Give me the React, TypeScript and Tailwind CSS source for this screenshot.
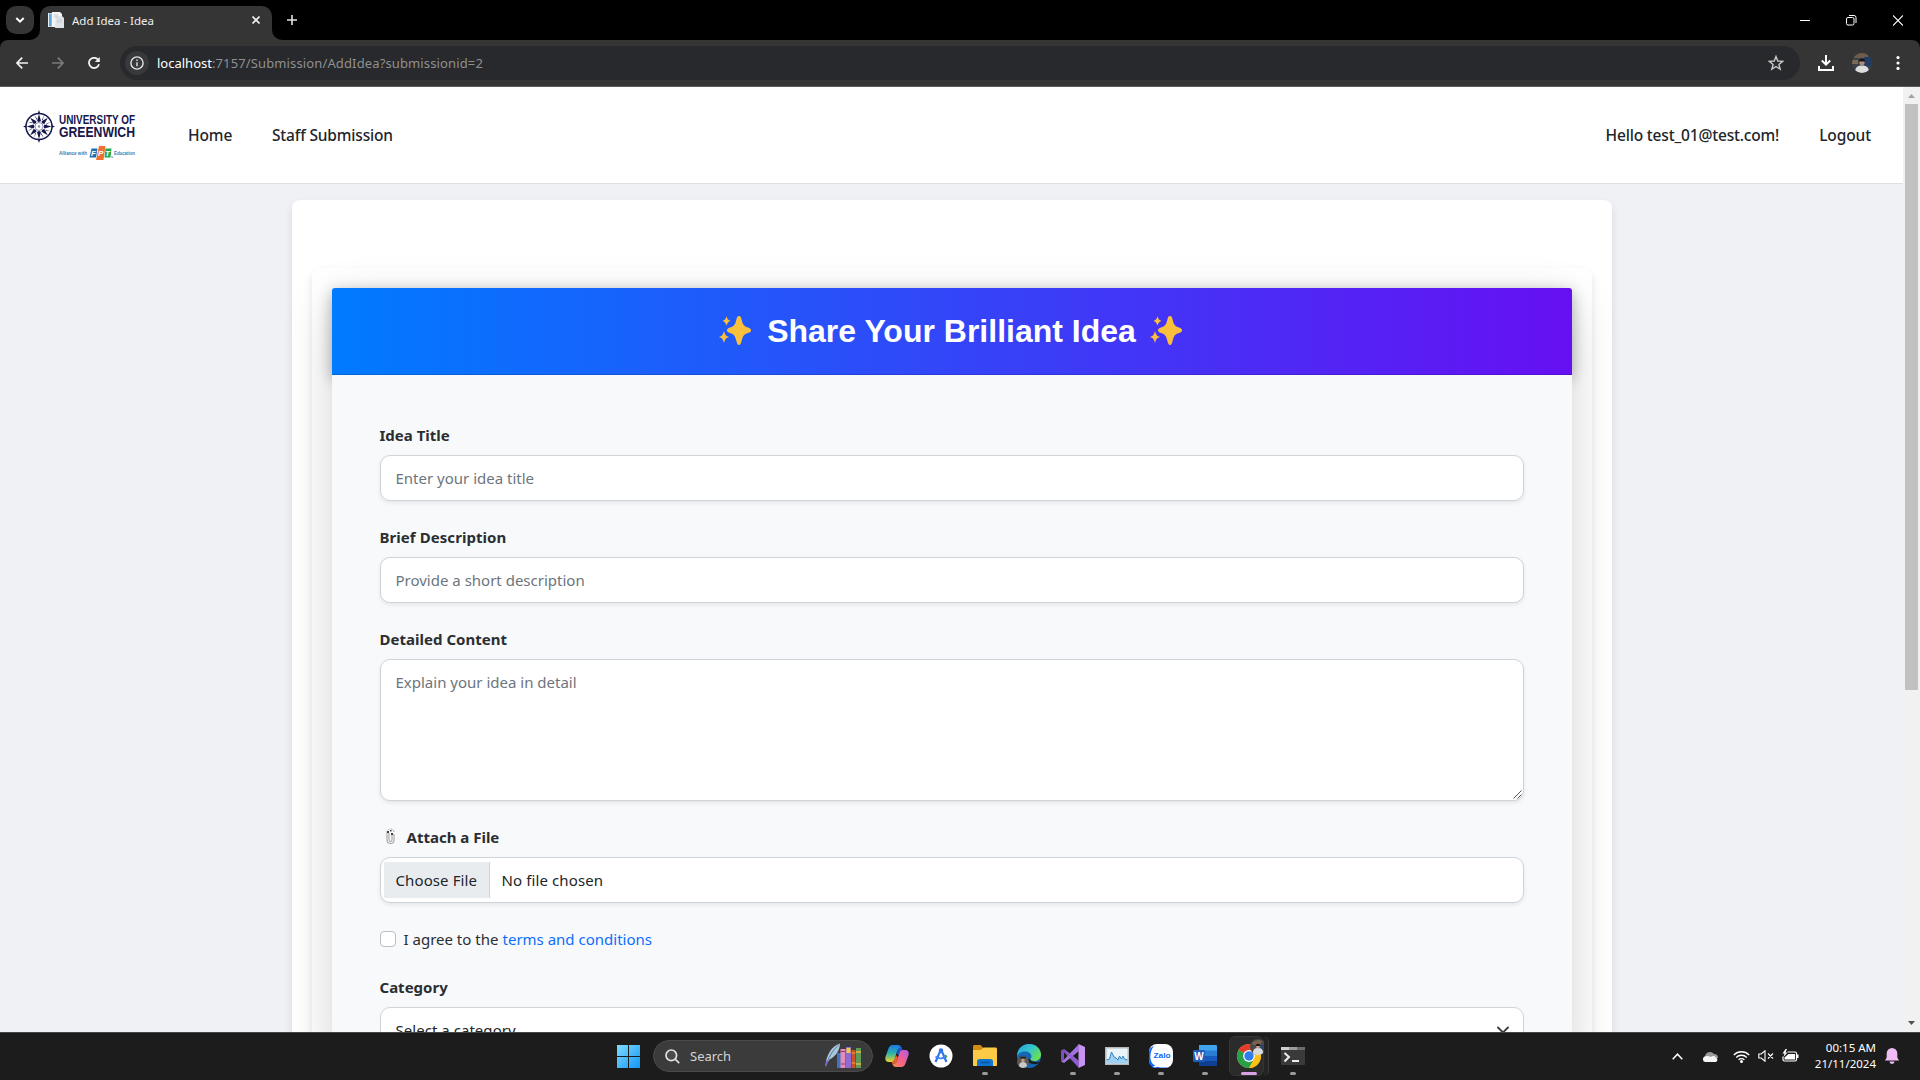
import React from "react";

function TabStrip() {
  return (
    <div className="flex h-10 items-start bg-black pt-1.5 pl-1.5">
      <button className="flex size-7 items-center justify-center rounded-[10px] bg-[#353535]">
        <svg width="10" height="6" viewBox="0 0 10 6" fill="none" stroke="#fff" strokeWidth="2">
          <path d="M1.3 1 5 4.6 8.7 1" />
        </svg>
      </button>
      <div className="relative ml-1.5 flex h-[34px] w-[232px] items-start rounded-t-[10px] bg-[#353535] pt-1.5 pl-2">
        <svg className="absolute bottom-0 -left-2.5" width="10" height="10">
          <path d="M10 0v10H0A10 10 0 0 0 10 0z" fill="#353535" />
        </svg>
        <svg className="absolute -right-2.5 bottom-0" width="10" height="10">
          <path d="M0 0v10h10A10 10 0 0 1 0 0z" fill="#353535" />
        </svg>
        <svg width="16" height="16" viewBox="0 0 16 16">
          <path d="M0 1h5v14H0z" fill="#e9f1f7" />
          <path d="M1 1.500h2.700v13H1z" fill="#5fa5d6" />
          <path d="M4 0h8l2 2v13H4z" fill="#f4f4f4" />
          <path d="M8 4h6l2 2v10H7z" fill="#dfe3e6" />
          <path d="M6 3h4M6 5h4M9 8h5M9 10h5" stroke="#c3cbd1" />
        </svg>
        <span className="mt-px ml-2 text-[11.5px] leading-[16px] text-[#eee]">Add Idea - Idea</span>
        <svg className="mt-[4px] ml-auto mr-3" width="8" height="8" viewBox="0 0 8 8" stroke="#eee" strokeWidth="1.600">
          <path d="M.5.5l7 7M7.500.5l-7 7" />
        </svg>
      </div>
      <svg className="mt-[9px] ml-[15px]" width="10" height="10" viewBox="0 0 10 10" stroke="#e3e3e3" strokeWidth="1.600">
        <path d="M5 0v10M0 5h10" />
      </svg>
      <div className="mt-[9px] mr-[17px] ml-auto flex gap-9">
        <svg width="10" height="10" stroke="#fff">
          <path d="M0 5.500h10" />
        </svg>
        <svg width="11" height="11" fill="none" stroke="#fff">
          <rect x=".5" y="2.500" width="7.500" height="7.500" rx="1.500" />
          <path d="M3 .5h5a2 2 0 0 1 2 2v5.500" />
        </svg>
        <svg width="10" height="11" viewBox="0 0 10 11" stroke="#fff" strokeWidth="1.100">
          <path d="M0 .5l10 10M10 .5l-10 10" />
        </svg>
      </div>
    </div>
  );
}

function Toolbar() {
  return (
    <div className="bg-black">
      <div className="flex h-[47px] items-start rounded-t-lg border-b border-[#5a5a5a] bg-[#353535] pt-1.5 pl-4">
        <div className="flex h-[34px] w-[104px] items-center">
          <svg width="12" height="12" viewBox="0 0 12 12" fill="none" stroke="#f1f1f1" strokeWidth="1.700">
            <path d="M12 6H1M6.200.6.9 6l5.300 5.400" />
          </svg>
          <svg className="ml-6" width="12" height="12" viewBox="0 0 12 12" fill="none" stroke="#7b7b7b" strokeWidth="1.700">
            <path d="M0 6h11M5.800.6 11.100 6l-5.300 5.400" />
          </svg>
          <svg className="ml-6" width="12" height="12" viewBox="0 0 12 12" fill="none" stroke="#f1f1f1" strokeWidth="1.800">
            <path d="M10.300 3A5.100 5.100 0 1 0 11 7.300" />
            <path d="M11.800 0v5H6.800z" fill="#f1f1f1" stroke="none" />
          </svg>
        </div>
        <div className="flex h-[34px] w-[1680px] items-center rounded-full bg-[#28292c] pl-[5px] pr-4">
          <span className="flex size-6 items-center justify-center rounded-full bg-[#38393b]">
            <svg width="14" height="14" viewBox="0 0 14 14" fill="none" stroke="#e3e3e3" strokeWidth="1.400">
              <circle cx="7" cy="7" r="6.100" />
              <path d="M7 6.300v4M7 3.500v1.500" />
            </svg>
          </span>
          <span className="ml-2 text-[13px] leading-4 text-[#8f9092]">
            <span className="text-white">localhost</span>
            <span className="tracking-[0.13px]">:7157/Submission/AddIdea?submissionid=2</span>
          </span>
          <svg className="ml-auto" width="16" height="16" viewBox="0 0 16 16" fill="none" stroke="#c7c7c7" strokeWidth="1.400">
            <path d="M8 1.400 9.800 6l4.900.3-3.800 3.100 1.300 4.800L8 11.500l-4.200 2.700 1.300-4.800L1.300 6.300 6.200 6z" />
          </svg>
        </div>
        <div className="ml-[17px] flex h-[34px] items-center">
          <svg width="18" height="18" viewBox="0 0 18 18" fill="none" stroke="#fff" strokeWidth="2">
            <path d="M9 1v9M4.800 6.500 9 10.700l4.200-4.200M2 12v4h14v-4" />
          </svg>
          <svg className="ml-[17px]" width="20" height="20" viewBox="0 0 20 20">
            <clipPath id="avatar">
              <circle cx="10" cy="10" r="10" />
            </clipPath>
            <g clipPath="url(#avatar)">
              <path d="M0 0h20v20H0z" fill="#3b4148" />
              <path d="M2 0h14v5H2z" fill="#6f5d4c" />
              <path d="M12 4h8v9h-8z" fill="#243c63" />
              <path d="M0 7h6v4H0z" fill="#7d6a52" />
              <path d="M3 20c0-5.500 2-7.500 7-7.500s7 2 7 7.500z" fill="#dcdedd" />
              <circle cx="10" cy="9.500" r="2.600" fill="#b58c77" />
              <path d="M7 8.500a3 3 0 0 1 6 0z" fill="#15161a" />
            </g>
          </svg>
          <svg className="ml-6" width="4" height="14" viewBox="0 0 4 14" fill="#fff">
            <circle cx="2" cy="1.600" r="1.600" />
            <circle cx="2" cy="7" r="1.600" />
            <circle cx="2" cy="12.400" r="1.600" />
          </svg>
        </div>
      </div>
    </div>
  );
}

const spokes = [0, 45, 90, 135, 180, 225, 270, 315];

function Logo() {
  return (
    <svg className="overflow-visible" width="114" height="54" viewBox="0 0 114 54" fontFamily="Liberation Sans, sans-serif">
      <g transform="translate(17 16.500)" fill="#15164b">
        <circle r="13" fill="none" stroke="#15164b" strokeWidth="1.500" />
        {spokes.map((a) => (
          <g key={a} transform={`rotate(${a})`}>
            <path d="M0-12.500 2-5.500 0-4.500-2-5.500z" />
            <path d="M4.700-11.500 3.900-6.200 3.200-6.800z" />
          </g>
        ))}
        <path d="M0-16.500 1.200-13h-2.400zM0 16.500l1.200-3.500h-2.400zM-16 0l3-1.200v2.400zM16 0l-3-1.200v2.400z" />
        <circle r="4" fill="none" stroke="#8d8eac" strokeWidth="1" />
        <circle r="1.200" fill="#8d8eac" />
      </g>
      <text x="37" y="14" fontSize="13" fontWeight="700" fill="#15164b" textLength="76" lengthAdjust="spacingAndGlyphs">UNIVERSITY OF</text>
      <text x="37" y="27.300" fontSize="15.500" fontWeight="700" fill="#15164b" textLength="76" lengthAdjust="spacingAndGlyphs">GREENWICH</text>
      <text x="37" y="45.300" fontSize="5.800" fontWeight="700" fill="#2f7fb8" textLength="28" lengthAdjust="spacingAndGlyphs">Alliance with</text>
      <path d="M69.500 38.500h6l-1.500 9h-6.500z" fill="#1b6fb5" />
      <path d="M83.500 38.500h6l-1 9h-6z" fill="#1fab4f" />
      <path d="M77 36h6.500l-2 14H74z" fill="#ee7130" />
      <g fontSize="8" fontWeight="700" fontStyle="italic" fill="#fff">
        <text x="69" y="46">F</text>
        <text x="76" y="46">P</text>
        <text x="83" y="46">T</text>
      </g>
      <path d="M89.500 46.500h1.200v1.200h-1.200z" fill="#1b6fb5" />
      <text x="92" y="45.300" fontSize="5.800" fontWeight="700" fill="#2f7fb8" textLength="21" lengthAdjust="spacingAndGlyphs">Education</text>
    </svg>
  );
}

function Navbar() {
  return (
    <nav className="flex h-[97px] shrink-0 items-center border-b border-[#dddfe3] bg-white pt-0.5 pr-8 pl-[22px] text-[15.5px] font-medium text-[#212529]">
      <div className="mt-px h-[54px] w-[166px]">
        <Logo />
      </div>
      <a className="w-[84px] tracking-[-0.1px]">Home</a>
      <a className="tracking-[-0.17px]">Staff Submission</a>
      <a className="mr-10 ml-auto tracking-[-0.17px]">Hello test_01@test.com!</a>
      <a className="tracking-[-0.11px]">Logout</a>
    </nav>
  );
}

function Sparkles() {
  return (
    <svg className="mt-[-2px]" width="32" height="29" viewBox="0 0 32 29" fill="#fac03c">
      <path d="M20 0c1.500 0 2 1 2.600 3.500 1.300 5.500 2.300 6.700 6.400 8 2 .7 3 1.400 3 2.800s-1 2.100-3 2.800c-4.100 1.300-5.100 2.600-6.400 8C22 27.500 21.500 29 20 29s-2-1.500-2.600-3.900c-1.300-5.400-2.300-6.700-6.400-8-2-.7-3-1.400-3-2.800s1-2.100 3-2.800c4.100-1.300 5.100-2.500 6.400-8C18 1 18.500 0 20 0z" />
      <path d="M7.500.3C8.700 3.500 9 4 11.500 5 9 6 8.700 6.500 7.500 9.700 6.300 6.500 6 6 3.500 5 6 4 6.300 3.500 7.500.3zM5 15c1.300 4.200 1.800 4.900 5 6-3.200 1.100-3.700 1.800-5 6-1.300-4.200-1.800-4.900-5-6 3.200-1.100 3.700-1.800 5-6z" />
    </svg>
  );
}

function Field({ label, children }: { label: React.ReactNode; children: React.ReactNode }) {
  return (
    <div className="mb-6">
      <label className="mb-2 flex h-6 items-center text-[15px] font-bold text-[#2b2e31]">{label}</label>
      {children}
    </div>
  );
}

function IdeaForm() {
  return (
    <div className="rounded-sm bg-[#f8f9fb] shadow-[0_16px_48px_rgba(0,0,0,0.175)]">
      <div className="flex h-[87px] items-center justify-center rounded-t-[3px] border-b border-black/15 bg-linear-to-r/srgb from-[#007bff] to-[#6610f2] pr-0.5 shadow-[0_4px_15px_rgba(0,0,0,0.3)]">
        <Sparkles />
        <h1 className="mr-[14px] ml-4 font-['Liberation_Sans'] text-[32px] leading-none font-bold text-white">Share Your Brilliant Idea</h1>
        <Sparkles />
      </div>
      <div className="relative bg-[#f8f9fb] px-12 pt-12">
        <Field label={<span>Idea Title</span>}>
          <div className="flex h-[46px] items-center rounded-[10px] border border-[#ced4da] bg-white px-[15px] text-[15px] text-[#6c757d] shadow-[0_2px_4px_rgba(0,0,0,0.08)]">Enter your idea title</div>
        </Field>
        <Field label={<span className="tracking-[0.06px]">Brief Description</span>}>
          <div className="flex h-[46px] items-center rounded-[10px] border border-[#ced4da] bg-white px-[15px] text-[15px] text-[#6c757d] shadow-[0_2px_4px_rgba(0,0,0,0.08)]">Provide a short description</div>
        </Field>
        <Field label={<span className="tracking-[0.02px]">Detailed Content</span>}>
          <div className="flex h-[142px] items-start justify-between rounded-[10px] border border-[#ced4da] bg-white pt-2.5 pl-[15px] text-[15px] leading-6 text-[#6c757d] shadow-[0_2px_4px_rgba(0,0,0,0.08)]">
            Explain your idea in detail
            <svg className="mr-px mb-px self-end" width="9" height="9" stroke="#555">
              <path d="M.5 8.500l8-8M4.500 8.500l4-4" />
            </svg>
          </div>
        </Field>
        <Field
          label={
            <>
              <svg className="mt-[-2px] mr-[12px] ml-[6px]" width="9" height="17" viewBox="0 0 9 17" fill="none">
                <path d="M1 5V12a3.500 3.500 0 0 0 7 0V6M3 5v7a1.500 1.500 0 0 0 3 0V7" stroke="#a5a5a5" strokeWidth="1.100" />
                <path d="M1 5C1 2 2.500 1 4.500 1S8 2 8 4" stroke="#aaa" strokeDasharray="2 1" />
                <path d="M1 3h2v2H1zM5 5h2v2H5zM4 2h1.500v1.500H4z" fill="#4b3a3a" />
              </svg>
              <span>Attach a File</span>
            </>
          }
        >
          <div className="flex h-[46px] items-center rounded-[10px] border border-[#ced4da] bg-white pl-[3px] text-[15px] text-[#212529] shadow-[0_2px_4px_rgba(0,0,0,0.08)]">
            <span className="flex h-9 w-[106px] items-center border-r border-[#ced4da] bg-[#e9ecef] pl-3 tracking-[0.1px]">Choose File</span>
            <span className="ml-3 tracking-[0.11px]">No file chosen</span>
          </div>
        </Field>
        <div className="mb-6 flex h-6 items-center text-[15px] text-[#2b2e31]">
          <span className="mr-2 size-4 rounded border border-[#bcbec1] bg-white" />
          <span className="w-[95px]">I agree to the</span>
          <a className="ml-[4px] text-[#0d6efd]">terms and conditions</a>
        </div>
        <Field label={<span>Category</span>}>
          <div className="flex h-[46px] items-center justify-between rounded-[10px] border border-[#ced4da] bg-white pr-[14px] pl-[15px] text-[15px] tracking-[0.04px] text-[#212529]">
            Select a category
            <svg width="12" height="8" viewBox="0 0 12 8" fill="none" stroke="#343a40" strokeWidth="1.800" strokeLinecap="round" strokeLinejoin="round">
              <path d="M1 1.500l5 5 5-5" />
            </svg>
          </div>
        </Field>
      </div>
    </div>
  );
}

function Scrollbar() {
  return (
    <div className="flex w-[17px] shrink-0 flex-col items-center bg-[#f1f1f1]">
      <svg className="mt-[7px]" width="7" height="4" fill="#a3a3a3">
        <path d="M3.500 0 7 4H0z" />
      </svg>
      <div className="mt-[6px] h-[586px] w-[13px] bg-[#c1c1c1]" />
      <svg className="mt-auto mb-[7px]" width="7" height="4" fill="#505050">
        <path d="M3.500 4 7 0H0z" />
      </svg>
    </div>
  );
}

function TaskItem({ children, open }: { children: React.ReactNode; open?: boolean }) {
  return (
    <div className="flex w-11 flex-col items-center">
      <div className="mt-[11px] size-6">{children}</div>
      {open && <span className="mt-1 h-[3px] w-1.5 rounded-full bg-[#9a9a9a]" />}
    </div>
  );
}

function Taskbar() {
  return (
    <div className="flex h-[48px] items-start border-t border-[#454545] bg-[#1c1c1c]">
      <svg className="mt-3 ml-[617px]" width="23" height="23" viewBox="0 0 23 23">
        <defs>
          <linearGradient id="win" x1="0" y1="0" x2="23" y2="23" gradientUnits="userSpaceOnUse">
            <stop stopColor="#7fdcff" />
            <stop offset="1" stopColor="#1296f5" />
          </linearGradient>
        </defs>
        <path fill="url(#win)" d="M0 0h11v11H0zM12 0h11v11H12zM0 12h11v11H0zM12 12h11v11H12z" />
      </svg>
      <div className="mt-[7px] ml-[13px] flex h-8 w-[220px] items-center rounded-full border border-[#4a4a4a] bg-[#3b3b3b] pl-[11px]">
        <svg width="15" height="15" viewBox="0 0 15 15" fill="none" stroke="#e0e0e0" strokeWidth="1.700">
          <circle cx="6.300" cy="6.300" r="5.300" fill="#4a4a4a" />
          <path d="M10.200 10.200l4 4" />
        </svg>
        <span className="ml-2.5 text-[13px] leading-4 text-[#d4d4d4]">Search</span>
        <svg className="mt-[-1px] ml-auto mr-[10px]" width="37" height="26" viewBox="0 0 37 26">
          <path d="M.5 23C1 13 6 3 15 .5c0 6-4 13-10.500 16z" fill="#a9c6dc" />
          <path d="M1 23.500C3 15 7 8 14 1.500" stroke="#5b7e9a" fill="none" />
          <path d="M0 23.500l1.500-6 2 1z" fill="#7d5fd0" />
          <path d="M12 10h4v15h-4z" fill="#3f73c8" />
          <path d="M15.500 6h5v19h-5z" fill="#e58bb4" />
          <path d="M16 8.500h4M16 21h4" stroke="#8f3f6f" />
          <path d="M21 4h5v21h-5z" fill="#8f6ad0" />
          <path d="M21.500 5h4v5h-4z" fill="#f1c948" />
          <path d="M26.500 7h4v18h-4z" fill="#c9542c" />
          <path d="M26.500 10h4M26.500 20h4" stroke="#f2a043" />
          <path d="M31 5h5v20h-5z" fill="#5e9b58" />
          <path d="M31 9h5M31 21h5" stroke="#f0b342" strokeWidth="1.500" />
        </svg>
      </div>
      <div className="ml-0.5 flex">
        <TaskItem>
          <svg viewBox="0 0 24 24">
            <defs>
              <linearGradient id="cpa" x1="0" y1="0" x2="0" y2="1">
                <stop stopColor="#1b78e8" />
                <stop offset=".5" stopColor="#2fb4a8" />
                <stop offset="1" stopColor="#f3d22b" />
              </linearGradient>
              <linearGradient id="cpb" x1="1" y1="0" x2="0" y2="1">
                <stop stopColor="#b05cf0" />
                <stop offset=".5" stopColor="#f0608e" />
                <stop offset="1" stopColor="#fb8a4a" />
              </linearGradient>
            </defs>
            <path d="M16.500 4C16 2 15 1 13 1H7.500C5.500 1 4.300 2.300 3.500 4.500L.6 12.500C-.4 16 1 18 3.500 18H6.500c2 0 2.700-1.200 3.300-3.200L12 7.500C12.700 5.200 14 4 16.500 4z" fill="url(#cpa)" />
            <path d="M7.500 20c.5 2 1.500 3 3.500 3h5.500c2 0 3.200-1.300 4-3.500l2.900-8c1-3.500-.4-5.500-2.900-5.500h-3c-2 0-2.700 1.200-3.300 3.200L12 16.500C11.300 18.800 10 20 7.500 20z" fill="url(#cpb)" />
            <path d="M13 1c2.500 0 3.300 1.500 4 3.500l.6 1.500c-2 0-2.700 1.200-3.400 3.200l-.7 2.300L11.500 9 12 7.500C12.500 5 13 4 15.500 4z" fill="#1f56c9" />
            <path d="M7.500 20c-.5-1-.8-2-1-2 2 0 2.700-1.200 3.300-3.200L11 11l1.800 2.500-.8 3C11.300 18.800 10 20 7.500 20z" fill="#e8642c" />
          </svg>
        </TaskItem>
        <TaskItem>
          <svg viewBox="0 0 24 24">
            <circle cx="12" cy="12" r="11.500" fill="#fff" />
            <path d="M12 5.500 6.500 18M12 5.500 17.500 18" stroke="#2f74ea" strokeWidth="2.200" fill="none" />
            <path d="M6.500 12.500c3 2.500 8 2.500 11-.5" stroke="#4285f4" strokeWidth="1.800" fill="none" />
            <circle cx="12" cy="6.500" r="2.200" fill="#2f74ea" />
            <path d="M15.500 10.500a3 3 0 0 1 3 2.500l-2 1z" fill="#34a853" />
            <circle cx="12" cy="11" r="1.300" fill="#fff" />
          </svg>
        </TaskItem>
        <TaskItem open>
          <svg viewBox="0 0 24 24">
            <path d="M0 2.500C0 1.700.7 1 1.500 1h6L10 3.500V8H0z" fill="#d18b12" />
            <path d="M0 6h8l2.500-2.500h12c.8 0 1.500.7 1.500 1.500v16c0 .6-.4 1-1 1H1c-.6 0-1-.4-1-1z" fill="#fbcb46" />
            <path d="M4 22v-4.500C4 16 5 15 6.500 15h11c1.500 0 2.500 1 2.500 2.500V22z" fill="#1174cf" />
            <path d="M7.500 18.500h9" stroke="#0b53a0" strokeWidth="1.500" />
          </svg>
        </TaskItem>
        <TaskItem>
          <svg viewBox="0 0 24 24">
            <defs>
              <linearGradient id="edge" x1="0" y1="0" x2="1" y2=".6">
                <stop stopColor="#2b9fe6" />
                <stop offset=".55" stopColor="#33c6c8" />
                <stop offset="1" stopColor="#6be04e" />
              </linearGradient>
            </defs>
            <circle cx="12" cy="12" r="12" fill="#1466b4" />
            <path d="M.3 9.500C1.500 4 6.200 0 12 0c7 0 12 5 12 10.500 0 4-3 6.500-6.500 6.500-2.500 0-4-.8-4-1.700 0-.8 1-1.200 1-3C14.500 10 12 7.500 8.500 7.500 4.500 7.500 1 9 .3 13z" fill="url(#edge)" />
            <path d="M13 15c0 2 3.500 4 9.500 2.500l-1.500 2c-4 1.500-10 .5-11-4z" fill="#1c1c1c" />
            <circle cx="6" cy="18" r="6" fill="#5d5751" />
            <path d="M2 22c0-3 1.800-4 4-4s4 1 4 4c-2 2.500-6 2.500-8 0z" fill="#c8c8c8" />
            <circle cx="6" cy="16.500" r="1.800" fill="#c09a84" />
            <path d="M3 13.500h6" stroke="#1f2329" strokeWidth="1.500" />
          </svg>
        </TaskItem>
        <TaskItem open>
          <svg viewBox="0 0 24 24">
            <path d="M17.500 0 24 3v18l-6.500 3z" fill="#c792f0" />
            <path d="M0 6.500 3 5l15 12v7L3 8.500v7L0 17z" fill="#7d52b8" />
            <path d="M0 17.500 3 19 18 7V0L3 15.500z" fill="#a273dc" />
            <path d="M3 9v6l3-3z" fill="#1c1c1c" />
            <path d="M3 5 18 17v7z" fill="#8f60cd" />
          </svg>
        </TaskItem>
        <TaskItem open>
          <svg viewBox="0 0 24 24">
            <path d="M0 3h24v18H0z" fill="#b6b9bb" />
            <path d="M1.500 4.500h21v15h-21z" fill="#e9f3fa" />
            <path d="M1.500 16l3-1 2-7 2.500 5 2 1 2 2 1.500-4 2 3 1.500-3 1.500 3 3 1v3.500h-21z" fill="#9fd0f2" />
            <path d="M1.500 16l3-1 2-7 2.500 5 2 1 2 2 1.500-4 2 3 1.500-3 1.500 3 3 1" fill="none" stroke="#2f86c6" />
          </svg>
        </TaskItem>
        <TaskItem open>
          <svg viewBox="0 0 24 24">
            <rect width="24" height="24" rx="8" fill="#fff" />
            <path d="M5 2C1 6-1 18 6 21.500c-1 1-2 1.300-4 1.500 2 1 5 .5 6.500-.3 3 1 7 1.200 10.500.3-1.500 1-3 1-4 1H8c-5 0-8-3-8-8V8c0-3 2-5 5-6z" fill="#0a68ff" />
            <text x="4.500" y="14" fontFamily="Liberation Sans, sans-serif" fontSize="8" fontWeight="700" fill="#0a68ff" textLength="17" lengthAdjust="spacingAndGlyphs">Zalo</text>
          </svg>
        </TaskItem>
        <TaskItem open>
          <svg viewBox="0 0 24 24">
            <path d="M6 1h17a1 1 0 0 1 1 1v5H6z" fill="#41a5ee" />
            <path d="M6 6.500h18V12H6z" fill="#2b7cd3" />
            <path d="M6 12h18v5H6z" fill="#185abd" />
            <path d="M6 17h18v4a1 1 0 0 1-1 1H7a1 1 0 0 1-1-1z" fill="#103f91" />
            <rect y="6" width="12" height="12" rx="1" fill="#1b5cbe" />
            <text x="6" y="15.500" textAnchor="middle" fontFamily="Liberation Sans, sans-serif" fontSize="10" fontWeight="700" fill="#fff">W</text>
          </svg>
        </TaskItem>
        <div className="flex w-11 pt-[3px] pl-0.5">
          <div className="flex h-10 w-[35px] flex-col items-center rounded-md border border-[#353535] bg-[#2b2b2b] pt-[7px] pl-[5px]">
            <svg className="size-6 shrink-0 overflow-visible" viewBox="0 0 24 24">
              <circle cx="12" cy="12" r="12" fill="#fbc116" />
              <path d="M12 12 1.600 6A12 12 0 0 1 22.400 6z" fill="#e33b2e" />
              <path d="M12 12 1.600 6A12 12 0 0 0 12 24l5.200-9z" fill="#27a047" />
              <path d="M12 6h10.400A12 12 0 0 1 12 24l5.200-9z" fill="#fbc116" />
              <circle cx="12" cy="12" r="5.900" fill="#fff" />
              <circle cx="12" cy="12" r="4.700" fill="#2f7bf0" />
              <circle cx="21" cy="3" r="8" fill="#4c4a48" />
              <path d="M15-1a8 8 0 0 1 10-2l-2 4h-7z" fill="#77624d" />
              <path d="M23 1h5v5h-5z" fill="#2c4468" />
              <path d="M16 9c0-4 2-5 5-5s5 1 5 5c-3 3-7 3-10 0z" fill="#d9dada" />
              <circle cx="21" cy="2.500" r="2" fill="#c39b86" />
              <path d="M18.800 2a2.200 2.200 0 0 1 4.400 0z" fill="#15161a" />
            </svg>
            <span className="mt-1 h-[3px] w-4 shrink-0 rounded-full bg-[#d9a0e6]" />
          </div>
          <div className="h-10 w-[5px] rounded-r-md border-r border-[#3a3a3a] bg-[#242424]" />
        </div>
        <TaskItem open>
          <svg viewBox="0 0 24 24">
            <rect y="3" width="24" height="18" rx="1" fill="#3a3a3a" />
            <path d="M0 3h8v3H0z" fill="#d0d0d0" />
            <path d="M8 3h8v3H8z" fill="#9c9c9c" />
            <path d="M16 3h8v3h-8z" fill="#6b6b6b" />
            <path d="M3.500 9l4.500 4-4.500 4.500M11 17h7" fill="none" stroke="#eee" strokeWidth="2" />
          </svg>
        </TaskItem>
      </div>
      <div className="ml-auto flex h-[46px] items-center pr-[21px]">
        <svg width="11" height="7" viewBox="0 0 11 7" fill="none" stroke="#fff" strokeWidth="1.500">
          <path d="M.7 6.200 5.500 1.200l4.800 5" />
        </svg>
        <svg className="ml-[19px]" width="17" height="11" viewBox="0 0 17 11">
          <path d="M3 5.500A5 5 0 0 1 12 3a4 4 0 0 1 4 4H1.500z" fill="#9b9b9b" />
          <path d="M3 11a3 3 0 0 1-.5-5.500C5 4.500 7 5 8.500 6c2.500-1.500 4-1 5.500.5A2.500 2.500 0 0 1 14 11z" fill="#f6f6f6" />
        </svg>
        <svg className="ml-[14px]" width="17" height="13" viewBox="0 0 17 13" fill="none" stroke="#fff" strokeWidth="1.300">
          <path d="M.8 5a10.800 10.800 0 0 1 15.400 0M3.200 7.500a7.400 7.400 0 0 1 10.600 0M5.600 9.900a4 4 0 0 1 5.800 0" />
          <circle cx="8.500" cy="11.400" r="1.500" fill="#fff" stroke="none" />
        </svg>
        <svg className="ml-[8px]" width="16" height="12" viewBox="0 0 16 12" fill="none" stroke="#fff" strokeWidth="1.100">
          <path d="M.8 4v4h2.400L7 11.200V.8L3.200 4zM10 3.500l5 5M15 3.500l-5 5" />
        </svg>
        <svg className="mt-[-2px] ml-[8px]" width="17" height="13" viewBox="0 0 17 13" fill="none" stroke="#fff" strokeWidth="1.200">
          <path d="M5.500 3H13a1.500 1.500 0 0 1 1.500 1.500v6A1.500 1.500 0 0 1 13 12H2.500A1.500 1.500 0 0 1 1 10.500V7.500" />
          <path d="M6.500 5h6.500v5.500H2.500V8.500z" fill="#fff" stroke="none" />
          <path d="M15 5.500h1.500v3.500H15zM3.500 0 .5 4.500h2l-1 3.500 4-4.500h-2L5 0z" fill="#fff" stroke="none" />
        </svg>
        <div className="mr-px ml-[15px] w-[62px] text-right text-[11.5px] leading-4 text-white">
          <div>00:15 AM</div>
          <div>21/11/2024</div>
        </div>
        <svg className="ml-[8px]" width="14" height="16" viewBox="0 0 14 16" fill="#efbcf4">
          <path d="M7 0a5.300 5.300 0 0 1 5.300 5.300V9.500L14 12.500H0L1.700 9.500V5.300A5.300 5.300 0 0 1 7 0zM4.500 13.500h5a2.500 2.500 0 0 1-5 0z" />
        </svg>
      </div>
    </div>
  );
}

export default function App() {
  return (
    <div className="flex h-[1080px] w-[1920px] flex-col overflow-hidden bg-black font-['Noto_Sans',sans-serif]">
      <TabStrip />
      <Toolbar />
      <div className="flex min-h-0 flex-1 overflow-hidden bg-[#f0f1f5]">
        <div className="flex min-w-0 flex-1 flex-col overflow-hidden">
          <Navbar />
          <main className="mx-auto mt-4 w-[1320px] shrink-0 rounded-lg bg-white px-5 pt-[68px] shadow-[0_4px_8px_rgba(0,0,0,0.1)]">
            <div className="rounded-lg bg-white p-5 shadow-[0_4px_8px_rgba(0,0,0,0.1)]">
              <IdeaForm />
            </div>
          </main>
        </div>
        <Scrollbar />
      </div>
      <Taskbar />
    </div>
  );
}
